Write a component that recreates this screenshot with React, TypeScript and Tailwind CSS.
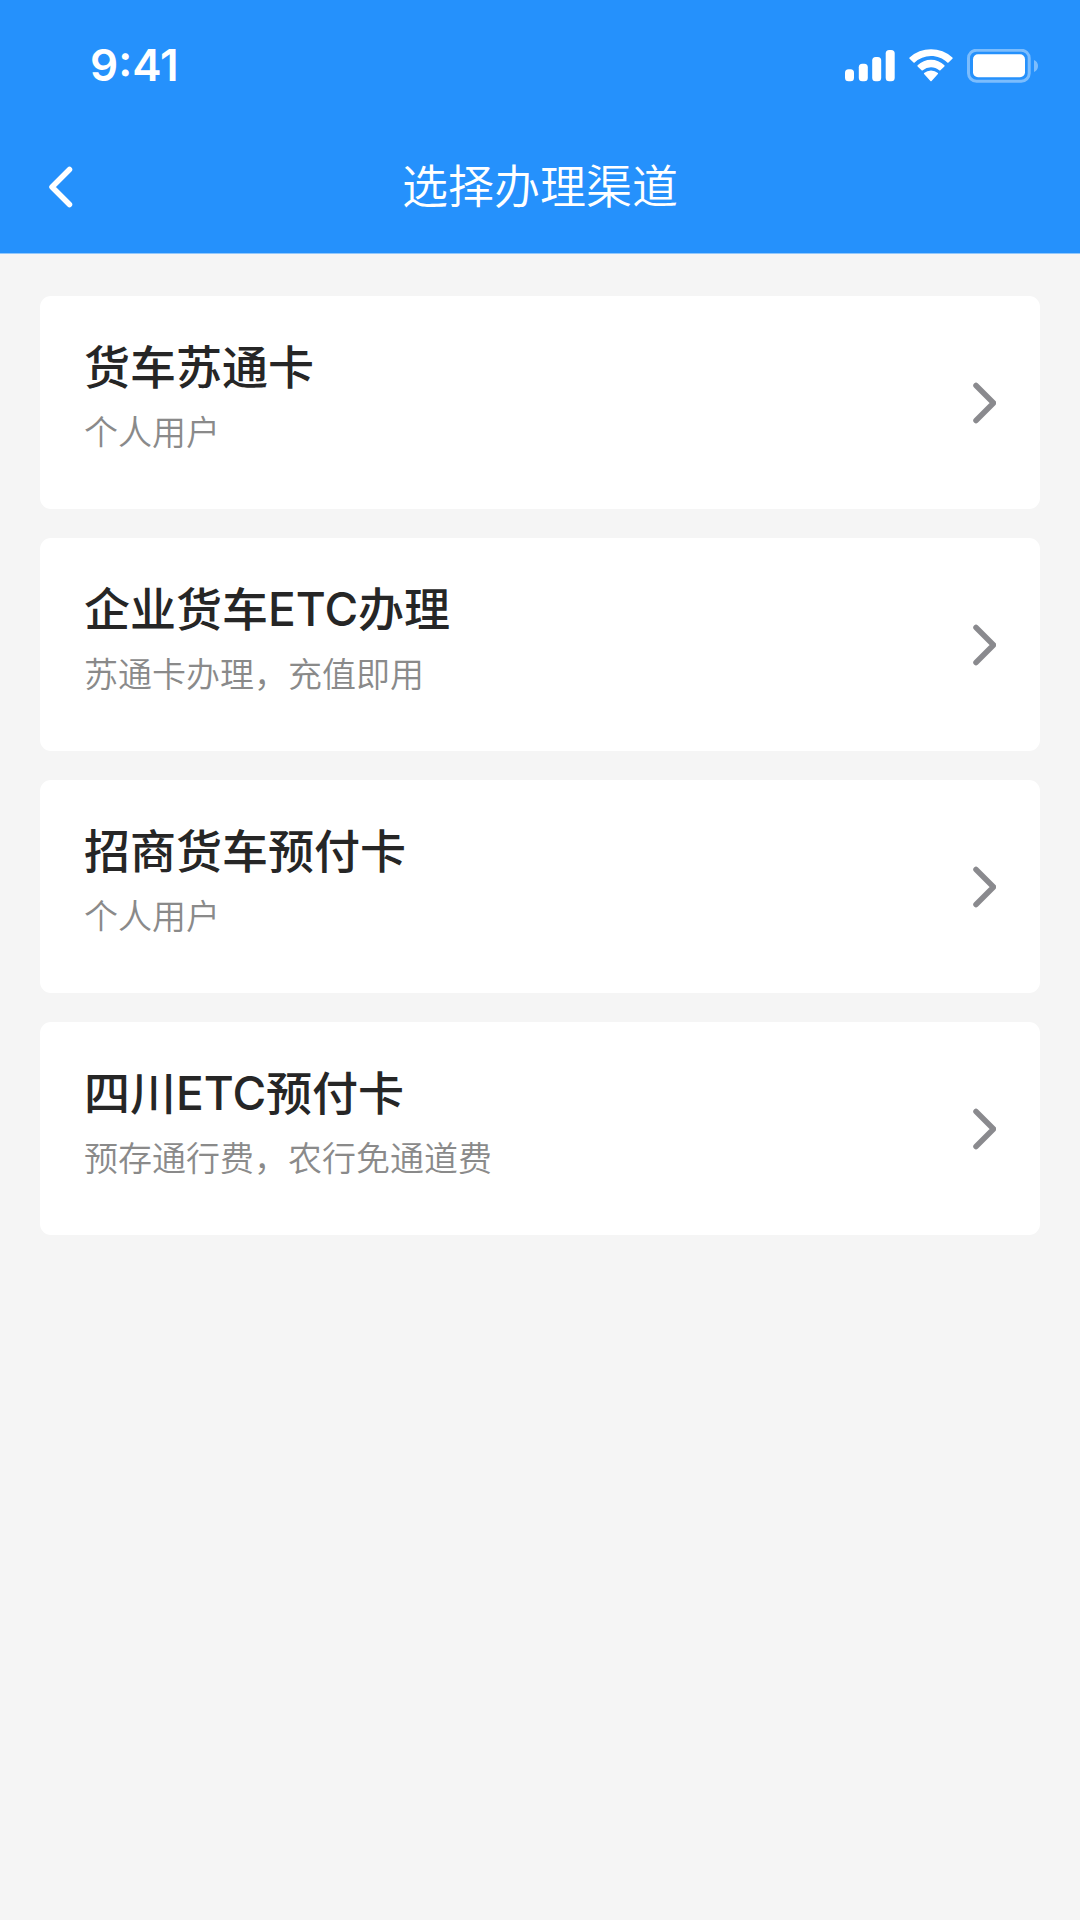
interface IChannel {
  id: number
  title: string
  desc: string
}

const channels: IChannel[] = [
  { id: 1, title: "货车苏通卡", desc: "个人用户" },
  { id: 2, title: "企业货车ETC办理", desc: "苏通卡办理，充值即用" },
  { id: 3, title: "招商货车预付卡", desc: "个人用户" },
  { id: 4, title: "四川ETC预付卡", desc: "预存通行费，农行免通道费" },
]

const StatusBar = () => {
  return (
    <div className="flex h-[131px] items-center justify-between pl-[90px] pr-[41px]">
      <span className="pb-[2px] text-[44px] leading-[52px] font-semibold">9:41</span>
      <div className="flex items-center gap-[14px]">
        <svg className="h-[34px] w-[50px]" viewBox="0 0 50 34" fill="currentColor">
          <rect x="0" y="20.3" width="9" height="12" rx="3.5" />
          <rect x="13.8" y="14.8" width="9" height="17.5" rx="3.5" />
          <rect x="27.2" y="8" width="9" height="24.3" rx="3.5" />
          <rect x="40.7" y="1" width="9" height="31.3" rx="3.5" />
        </svg>
        <svg className="h-[34px] w-[44px]" viewBox="0 0 44 34" fill="currentColor">
          <path d="M22 7.1c6.2 0 11.9 2.3 16.3 6.5.3.3.8.3 1.2 0l3.9-3.8c.4-.3.4-.9 0-1.3A31.600 31.600 0 0 0 .6 8.500c-.4.4-.4 1 0 1.300l3.900 3.800c.4.3.9.3 1.200 0A23.600 23.600 0 0 1 22 7.100Z" />
          <path d="M22 18.200c3 0 5.900 1.100 8.200 3.100.4.3.9.3 1.200 0l4-3.900c.3-.3.3-.9 0-1.200a19.500 19.500 0 0 0-26.800 0c-.3.3-.3.9 0 1.200l4 3.900c.3.3.8.3 1.200 0A12.400 12.400 0 0 1 22 18.200Z" />
          <path d="M28.900 25.100c.3-.3.3-.9 0-1.200a10.700 10.700 0 0 0-13.800 0c-.3.3-.3.900 0 1.200l6.300 6.900c.3.4.9.4 1.200 0Z" />
        </svg>
        <svg className="h-[34px] w-[72px]" viewBox="0 0 72 34" fill="currentColor">
          <rect x="1.500" y="1.200" width="60.700" height="31" rx="8" fill="none" stroke="currentColor" strokeWidth="3" opacity="0.4" />
          <path d="M67 11v12c2.500-1 4-3.300 4-6s-1.500-5-4-6Z" opacity="0.4" />
          <rect x="6" y="5.200" width="52" height="23" rx="5" />
        </svg>
      </div>
    </div>
  )
}

const NavBar = () => {
  return (
    <div className="grid h-[122px] grid-cols-[1fr_auto_1fr] items-center px-[43px] pb-[10px]">
      <button type="button" aria-label="返回" className="justify-self-start px-[6px]">
        <svg className="h-[42px] w-[24px]" viewBox="0 0 24 42" fill="none" stroke="currentColor" strokeWidth="5.500" strokeLinecap="round" strokeLinejoin="round">
          <path d="M20.500 3.500 3 21l17.500 17.500" />
        </svg>
      </button>
      <h1 className="pb-[2px] text-[46px] leading-[64px] font-[350]">选择办理渠道</h1>
    </div>
  )
}

const ChannelCard = ({ title, desc }: IChannel) => {
  return (
    <button type="button" className="flex h-[213px] w-full items-center justify-between rounded-[11px] bg-white px-[44px] text-left">
      <span className="flex flex-col gap-[10px] pb-[13px]">
        <span className="text-[46px] leading-[64px] font-medium text-[#262626]">{title}</span>
        <span className="text-[34px] leading-[48px] font-[350] text-[#8a8a8a]">{desc}</span>
      </span>
      <svg className="h-[42px] w-[24px] shrink-0 text-[#8a8a8e]" viewBox="0 0 24 42" fill="none" stroke="currentColor" strokeWidth="5.500" strokeLinecap="round" strokeLinejoin="round">
        <path d="M4 3.500 21.500 21 4 38.500" />
      </svg>
    </button>
  )
}

const App = () => {
  return (
    <div className="min-h-screen bg-[#f5f5f5] font-[Inter,'Noto_Sans_CJK_SC',sans-serif]">
      <header className="border-b border-[#92c8fc] bg-[#2591fc] text-white">
        <StatusBar />
        <NavBar />
      </header>
      <main className="flex flex-col gap-[29px] px-[40px] pt-[42px]">
        {channels.map((channel) => (
          <ChannelCard key={channel.id} {...channel} />
        ))}
      </main>
    </div>
  )
}

export default App
